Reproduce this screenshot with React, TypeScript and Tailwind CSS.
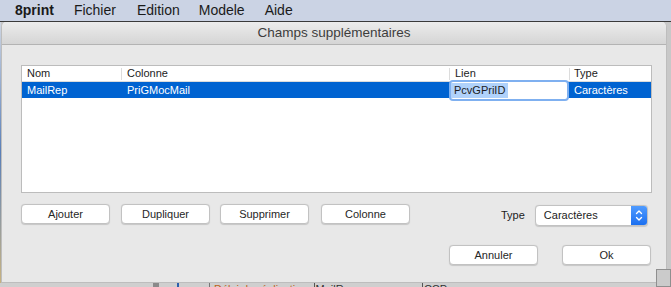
import React from "react";

const font = { fontFamily: '"Liberation Sans", Arial, sans-serif' };

function Btn({ label, className = "" }: { label: string; className?: string }) {
  return (
    <div
      className={`h-[20px] w-[89px] flex items-center justify-center rounded-[4px] bg-white border border-[#c2c2c2] shadow-[0_0.5px_1px_rgba(0,0,0,0.15)] text-[11px] text-[#262626] ${className}`}
    >
      {label}
    </div>
  );
}

export default function App() {
  return (
    <div className="w-[671px] h-[287px] relative overflow-hidden bg-[#c8c8c8]" style={font}>
      {/* menu bar */}
      <div className="h-[21px] bg-[#cbd3e4] flex items-center text-[14px] text-[#1a1a1a]">
        <span className="ml-[15px] font-bold">8print</span>
        <span className="ml-[20px]">Fichier</span>
        <span className="ml-[21px]">Edition</span>
        <span className="ml-[19px]">Modele</span>
        <span className="ml-[20px]">Aide</span>
      </div>
      <div className="h-[1px] bg-[#3a3a3a]" />
      <div className="flex h-[261px]">
        <div className="w-[1px] bg-gradient-to-b from-[#cfd6e2] via-[#5a7fb8] to-[#c8b27e]" />
        <div className="w-[666px] flex flex-col bg-[#e8e8e8] rounded-t-[5px] border-l border-r border-b border-[#bdbdbd] overflow-hidden">
          {/* title bar */}
          <div className="h-[23px] shrink-0 bg-gradient-to-b from-[#ececec] to-[#d5d5d5] border-b border-[#b3b3b3] flex items-center justify-center text-[13.5px] text-[#3d3d3d]">
            Champs supplémentaires
          </div>
          <div className="flex-1 flex flex-col pl-[19px] pr-[14px] pt-[20px]">
            {/* table */}
            <div className="h-[128px] w-[631px] bg-white border border-[#bcbcbc] text-[11px] text-[#1c1c1c]">
              <div className="h-[16px] flex items-center border-b border-[#dcdcdc]">
                <div className="w-[100px] pl-[5px] border-r border-[#dcdcdc] h-[12px] flex items-center">Nom</div>
                <div className="w-[328px] pl-[5px] border-r border-[#dcdcdc] h-[12px] flex items-center">Colonne</div>
                <div className="w-[120px] pl-[5px] border-r border-[#dcdcdc] h-[12px] flex items-center">Lien</div>
                <div className="flex-1 pl-[4px] h-[12px] flex items-center">Type</div>
              </div>
              <div className="h-[16px] flex items-center bg-[#0063d1] text-white">
                <div className="w-[100px] pl-[5px]">MailRep</div>
                <div className="w-[328px] pl-[5px]">PriGMocMail</div>
                <div className="w-[120px] pl-[1px] h-[16px] flex items-center">
                  <div className="w-[116px] h-[17px] mt-[1px] bg-white rounded-[2px] shadow-[0_0_0_2px_#7fb0f0] flex items-center text-[#1c1c1c]">
                    <span className="bg-[#b0d2fb] px-[3px] leading-[15px]">PcvGPriID</span>
                  </div>
                </div>
                <div className="flex-1 pl-[4px]">Caractères</div>
              </div>
            </div>
            {/* buttons row */}
            <div className="flex items-center mt-[10px] h-[22px]">
              <Btn label="Ajouter" />
              <Btn label="Dupliquer" className="ml-[11px]" />
              <Btn label="Supprimer" className="ml-[10px]" />
              <Btn label="Colonne" className="ml-[12px]" />
              <span className="ml-[91px] text-[11px] text-[#1c1c1c] mt-[2px]">Type</span>
              <div className="ml-[10px] mt-[3px] w-[113px] h-[21px] flex rounded-[4px] bg-white border border-[#c2c2c2] shadow-[0_0.5px_1px_rgba(0,0,0,0.15)] overflow-hidden">
                <div className="flex-1 flex items-center pl-[8px] text-[11px] text-[#1c1c1c]">Caractères</div>
                <div className="w-[16px] bg-gradient-to-b from-[#4f9bff] to-[#1a6ff0] flex items-center justify-center">
                  <svg width="8" height="13" viewBox="0 0 8 13" fill="none" stroke="white" strokeWidth="1.4" strokeLinecap="round" strokeLinejoin="round">
                    <path d="M1.5 4.5 L4 2 L6.5 4.5" />
                    <path d="M1.5 8.5 L4 11 L6.5 8.5" />
                  </svg>
                </div>
              </div>
            </div>
            {/* bottom buttons */}
            <div className="flex justify-end mt-[20px] pr-[1px]">
              <Btn label="Annuler" className="w-[88px]" />
              <Btn label="Ok" className="ml-[24px]" />
            </div>
          </div>
        </div>
      </div>
      {/* bottom strip of background app */}
      <div className="h-[4px] bg-[#cfcfcf] flex overflow-hidden text-[11px] leading-[11px]">
        <div className="ml-[153px] w-[6px] bg-[#8a8a8a]" />
        <div className="ml-[18px] w-[2px] bg-[#2b5fad]" />
        <div className="ml-[30px] w-[1px] bg-[#777]" />
        <span className="ml-[4px] text-[#c0621a] mt-[1px]">Délai de réalisation</span>
        <div className="ml-[6px] w-[1px] bg-[#555]" />
        <span className="ml-[1px] text-[#333] mt-[1px]">MailRep</span>
        <div className="ml-[66px] w-[1px] bg-[#555]" />
        <span className="ml-[1px] text-[#333] mt-[1px]">CCP</span>
      </div>
      {/* resize box */}
      <div className="absolute left-[656px] top-[269px] w-[15px] h-[18px] bg-[#cbcbcb] border border-[#8f8f8f]" />
    </div>
  );
}
